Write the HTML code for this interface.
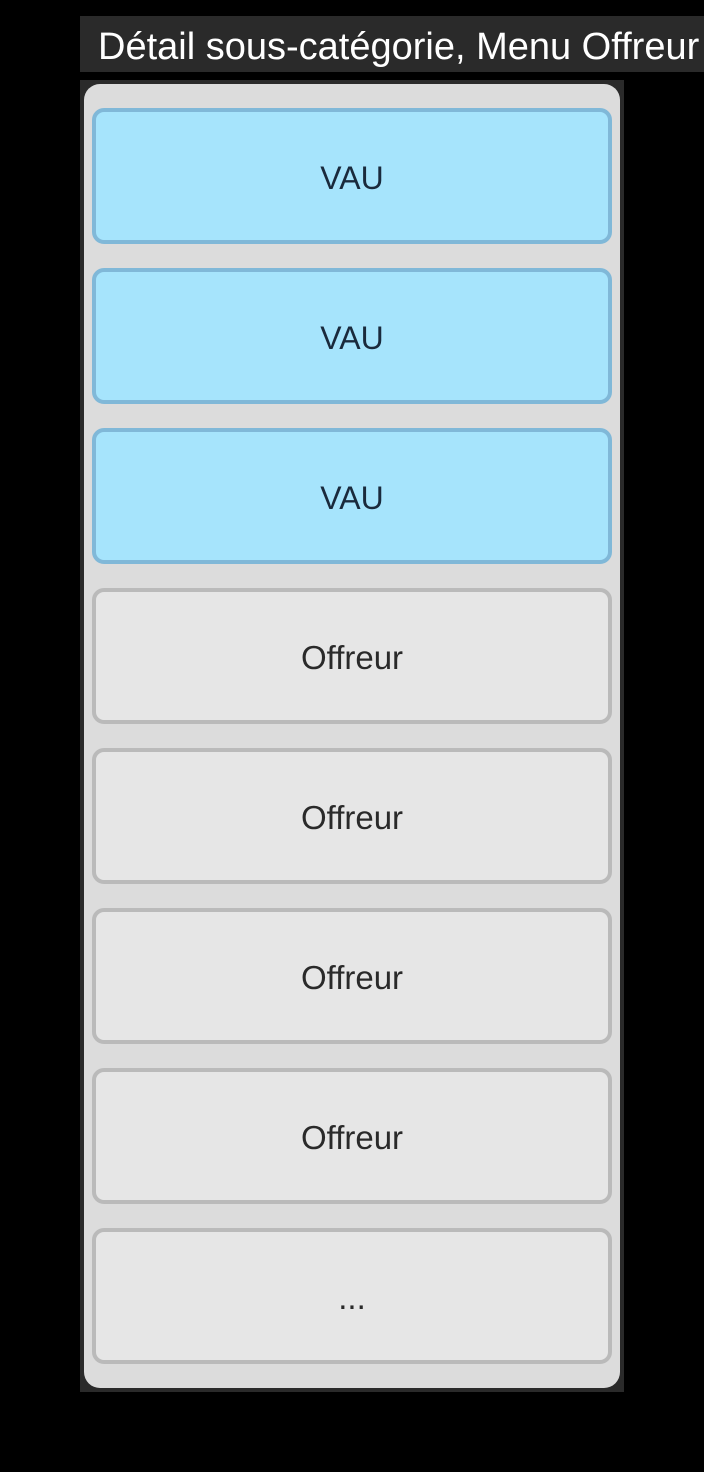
<!DOCTYPE html>
<html><head><meta charset="utf-8"><style>
*{box-sizing:border-box;margin:0;padding:0}
body{width:704px;height:1472px;background:#000;position:relative;overflow:hidden;font-family:"Liberation Sans",sans-serif}
.title{position:absolute;left:80px;top:16px;width:624px;height:56px;background:#2a2a2a;color:#fff;font-size:38px;line-height:62px;padding-left:18px;white-space:nowrap;overflow:hidden}
.frame{position:absolute;left:80px;top:80px;width:544px;height:1312px;background:#2a2a2a}
.panel{position:absolute;left:84px;top:84px;width:536px;height:1304px;background:#dcdcdc;border-radius:16px}
.card{position:absolute;left:92px;width:520px;height:136px;border:4px solid #bababa;background:#e6e6e6;border-radius:12px;text-align:center;line-height:132px;font-size:33px;color:#2a2a2a}
.v{border-color:#80b8d8;background:#a6e4fc;color:#1a2a3c;font-size:32px}
</style></head><body>
<div class="title">Détail sous-catégorie, Menu Offreur</div>
<div class="frame"></div>
<div class="panel"></div>
<div class="card v" style="top:108px">VAU</div>
<div class="card v" style="top:268px">VAU</div>
<div class="card v" style="top:428px">VAU</div>
<div class="card" style="top:588px">Offreur</div>
<div class="card" style="top:748px">Offreur</div>
<div class="card" style="top:908px">Offreur</div>
<div class="card" style="top:1068px">Offreur</div>
<div class="card" style="top:1228px">...</div>
</body></html>
